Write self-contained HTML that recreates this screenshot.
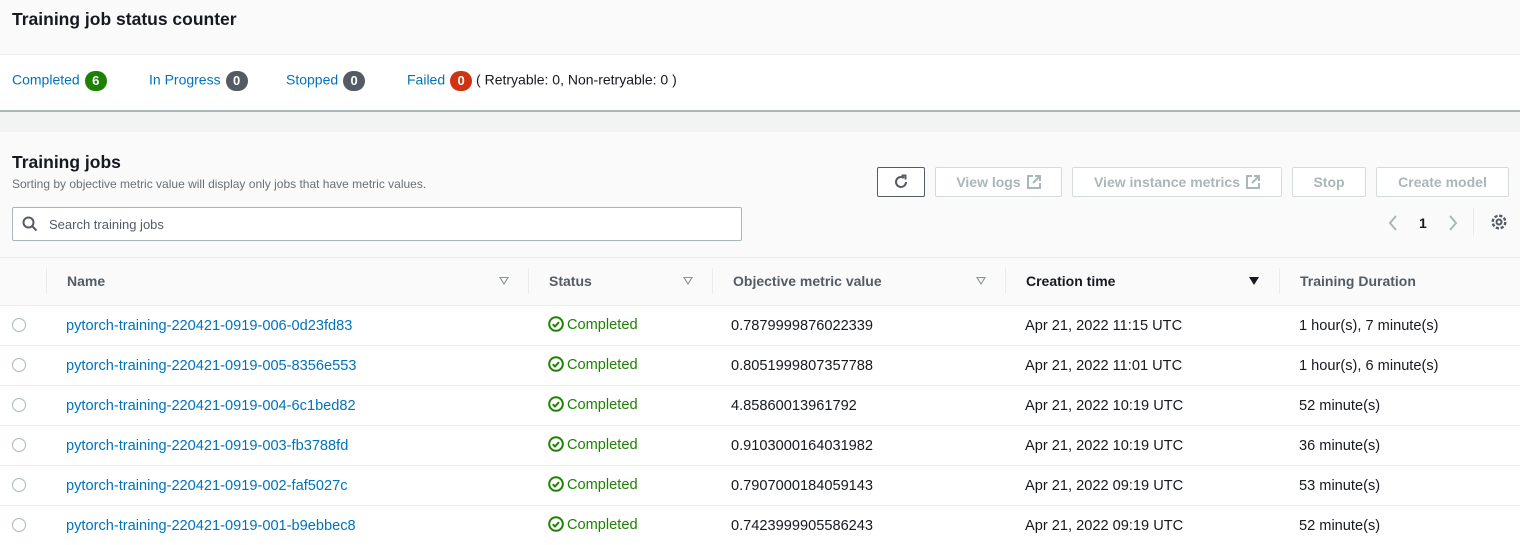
<!DOCTYPE html>
<html><head><meta charset="utf-8"><style>
*{box-sizing:border-box;margin:0;padding:0}
body{width:1520px;height:545px;overflow:hidden;background:#fff;font-family:"Liberation Sans",sans-serif;font-size:14px;color:#16191f;position:relative}
.a{position:absolute;white-space:nowrap}
.lnk{color:#0073bb}
.badge{display:inline-block;width:22px;height:20px;border-radius:10px;color:#fff;font-size:13px;font-weight:bold;text-align:center;line-height:20px;vertical-align:middle;margin-left:5px}
.btn{position:absolute;top:167px;height:30px;border:1px solid #d5dbdb;border-radius:2px;color:#aab7b8;font-weight:bold;font-size:14px;text-align:center;line-height:28px;background:#fff}
.btn svg{vertical-align:-2px;margin-left:6px}
.hd{position:absolute;top:273px;font-weight:bold;color:#545b64}
.div{position:absolute;top:268px;width:1px;height:26px;background:#eaeded}
.row{position:absolute;left:0;width:1520px;height:40px;border-top:1px solid #eaeded;background:#fff;font-size:14.6px}
.row span{position:absolute;top:12px;white-space:nowrap}
.row span.ok{top:10px}
.rad{position:absolute;left:12px;top:12px;width:14px;height:14px;border:1px solid #aab7b8;border-radius:50%}
.ok{color:#1d8102}
.ok svg{vertical-align:-3px;margin-right:3px}
.tri{position:absolute;top:277px;width:0;height:0;border-left:5px solid transparent;border-right:5px solid transparent;border-top:8px solid #879596}
.tri::after{content:"";position:absolute;left:-3px;top:-7px;border-left:3px solid transparent;border-right:3px solid transparent;border-top:5px solid #fafafa}
</style></head><body>
<div class="a" style="left:0;top:0;width:1520px;height:55px;background:#fafafa;border-bottom:1px solid #eaeded"></div>
<div class="a" style="left:12px;top:9px;font-size:17.5px;font-weight:bold">Training job status counter</div>
<div class="a" style="left:0;top:110px;width:1520px;height:2px;background:#aab7b8"></div>
<div class="a" style="left:0;top:112px;width:1520px;height:20px;background:#f2f3f3"></div>
<div class="a" style="left:0;top:132px;width:1520px;height:125px;background:#fafafa"></div>
<div class="a" style="left:12px;top:71px"><span class="lnk">Completed</span><span class="badge" style="background:#1d8102">6</span></div>
<div class="a" style="left:149px;top:71px"><span class="lnk">In Progress</span><span class="badge" style="background:#545b64">0</span></div>
<div class="a" style="left:286px;top:71px"><span class="lnk">Stopped</span><span class="badge" style="background:#545b64">0</span></div>
<div class="a" style="left:407px;top:71px"><span class="lnk">Failed</span><span class="badge" style="background:#d13212">0</span> ( Retryable: 0, Non-retryable: 0 )</div>

<div class="a" style="left:12px;top:152px;font-size:17.5px;font-weight:bold">Training jobs</div>
<div class="a" style="left:12px;top:177px;font-size:12px;color:#687078">Sorting by objective metric value will display only jobs that have metric values.</div>
<div class="a" style="left:12px;top:207px;width:730px;height:34px;border:1px solid #aab7b8;border-radius:2px;background:#fff"></div>
<svg class="a" style="left:22px;top:216px" width="16" height="16" viewBox="0 0 16 16"><circle cx="6.5" cy="6.5" r="5" fill="none" stroke="#545b64" stroke-width="2"/><path d="M10 10l4.5 4.5" stroke="#545b64" stroke-width="2"/></svg>
<div class="a" style="left:49px;top:217px;font-size:13px;color:#545b64">Search training jobs</div>

<div class="btn" style="left:877px;width:48px;border-color:#545b64"><svg width="18" height="18" viewBox="0 0 18 18" style="margin:5px 0 0 0"><path d="M14 9a5 5 0 1 1-2-4" fill="none" stroke="#545b64" stroke-width="2"/><path d="M9.5 2.5h4v4" fill="none" stroke="#545b64" stroke-width="2"/></svg></div>
<div class="btn" style="left:935px;width:127px">View logs<svg width="14" height="14" viewBox="0 0 14 14"><path d="M6 1H1v12h12V8M8 1h5v5M13 1L6 8" fill="none" stroke="#aab7b8" stroke-width="2"/></svg></div>
<div class="btn" style="left:1072px;width:210px">View instance metrics<svg width="14" height="14" viewBox="0 0 14 14"><path d="M6 1H1v12h12V8M8 1h5v5M13 1L6 8" fill="none" stroke="#aab7b8" stroke-width="2"/></svg></div>
<div class="btn" style="left:1292px;width:74px">Stop</div>
<div class="btn" style="left:1376px;width:133px">Create model</div>

<svg class="a" style="left:1387px;top:214px" width="12" height="18" viewBox="0 0 12 18"><path d="M9 2L3 9l6 7" fill="none" stroke="#aab7b8" stroke-width="2"/></svg>
<div class="a" style="left:1419px;top:215px;font-weight:bold">1</div>
<svg class="a" style="left:1447px;top:214px" width="12" height="18" viewBox="0 0 12 18"><path d="M3 2l6 7-6 7" fill="none" stroke="#aab7b8" stroke-width="2"/></svg>
<div class="a" style="left:1473px;top:208px;width:1px;height:28px;background:#eaeded"></div>
<svg class="a" style="left:1490px;top:213px" width="18" height="18" viewBox="0 0 18 18"><circle cx="9" cy="9" r="6.3" fill="none" stroke="#545b64" stroke-width="2.4" stroke-dasharray="3.2 1.75"/><circle cx="9" cy="9" r="2.5" fill="none" stroke="#545b64" stroke-width="2"/></svg>

<div class="a" style="left:0;top:257px;width:1520px;height:49px;background:#fafafa;border-top:1px solid #eaeded"></div>
<div class="div" style="left:46px"></div><div class="div" style="left:528px"></div><div class="div" style="left:712px"></div><div class="div" style="left:1005px"></div><div class="div" style="left:1279px"></div>
<div class="hd" style="left:67px">Name</div>
<div class="hd" style="left:549px">Status</div>
<div class="hd" style="left:733px">Objective metric value</div>
<div class="hd" style="left:1026px;color:#16191f">Creation time</div>
<div class="hd" style="left:1300px">Training Duration</div>
<div class="tri" style="left:499px"></div><div class="tri" style="left:683px"></div><div class="tri" style="left:976px"></div>
<div class="a" style="left:1249px;top:277px;border-left:5px solid transparent;border-right:5px solid transparent;border-top:8px solid #16191f"></div>

<svg width="0" height="0" style="position:absolute"><defs><symbol id="ck" viewBox="0 0 16 16"><circle cx="8" cy="8" r="6.8" fill="none" stroke="#1d8102" stroke-width="2"/><path d="M4.8 8.2l2.2 2.2 4-4.2" fill="none" stroke="#1d8102" stroke-width="2"/></symbol></defs></svg>

<div class="row" style="top:305px"><div class="rad"></div><span class="lnk" style="left:66px">pytorch-training-220421-0919-006-0d23fd83</span><span class="ok" style="left:548px"><svg width="16" height="16"><use href="#ck"/></svg>Completed</span><span style="left:731px">0.7879999876022339</span><span style="left:1025px">Apr 21, 2022 11:15 UTC</span><span style="left:1299px">1 hour(s), 7 minute(s)</span></div>
<div class="row" style="top:345px"><div class="rad"></div><span class="lnk" style="left:66px">pytorch-training-220421-0919-005-8356e553</span><span class="ok" style="left:548px"><svg width="16" height="16"><use href="#ck"/></svg>Completed</span><span style="left:731px">0.8051999807357788</span><span style="left:1025px">Apr 21, 2022 11:01 UTC</span><span style="left:1299px">1 hour(s), 6 minute(s)</span></div>
<div class="row" style="top:385px"><div class="rad"></div><span class="lnk" style="left:66px">pytorch-training-220421-0919-004-6c1bed82</span><span class="ok" style="left:548px"><svg width="16" height="16"><use href="#ck"/></svg>Completed</span><span style="left:731px">4.85860013961792</span><span style="left:1025px">Apr 21, 2022 10:19 UTC</span><span style="left:1299px">52 minute(s)</span></div>
<div class="row" style="top:425px"><div class="rad"></div><span class="lnk" style="left:66px">pytorch-training-220421-0919-003-fb3788fd</span><span class="ok" style="left:548px"><svg width="16" height="16"><use href="#ck"/></svg>Completed</span><span style="left:731px">0.9103000164031982</span><span style="left:1025px">Apr 21, 2022 10:19 UTC</span><span style="left:1299px">36 minute(s)</span></div>
<div class="row" style="top:465px"><div class="rad"></div><span class="lnk" style="left:66px">pytorch-training-220421-0919-002-faf5027c</span><span class="ok" style="left:548px"><svg width="16" height="16"><use href="#ck"/></svg>Completed</span><span style="left:731px">0.7907000184059143</span><span style="left:1025px">Apr 21, 2022 09:19 UTC</span><span style="left:1299px">53 minute(s)</span></div>
<div class="row" style="top:505px"><div class="rad"></div><span class="lnk" style="left:66px">pytorch-training-220421-0919-001-b9ebbec8</span><span class="ok" style="left:548px"><svg width="16" height="16"><use href="#ck"/></svg>Completed</span><span style="left:731px">0.7423999905586243</span><span style="left:1025px">Apr 21, 2022 09:19 UTC</span><span style="left:1299px">52 minute(s)</span></div>
</body></html>
